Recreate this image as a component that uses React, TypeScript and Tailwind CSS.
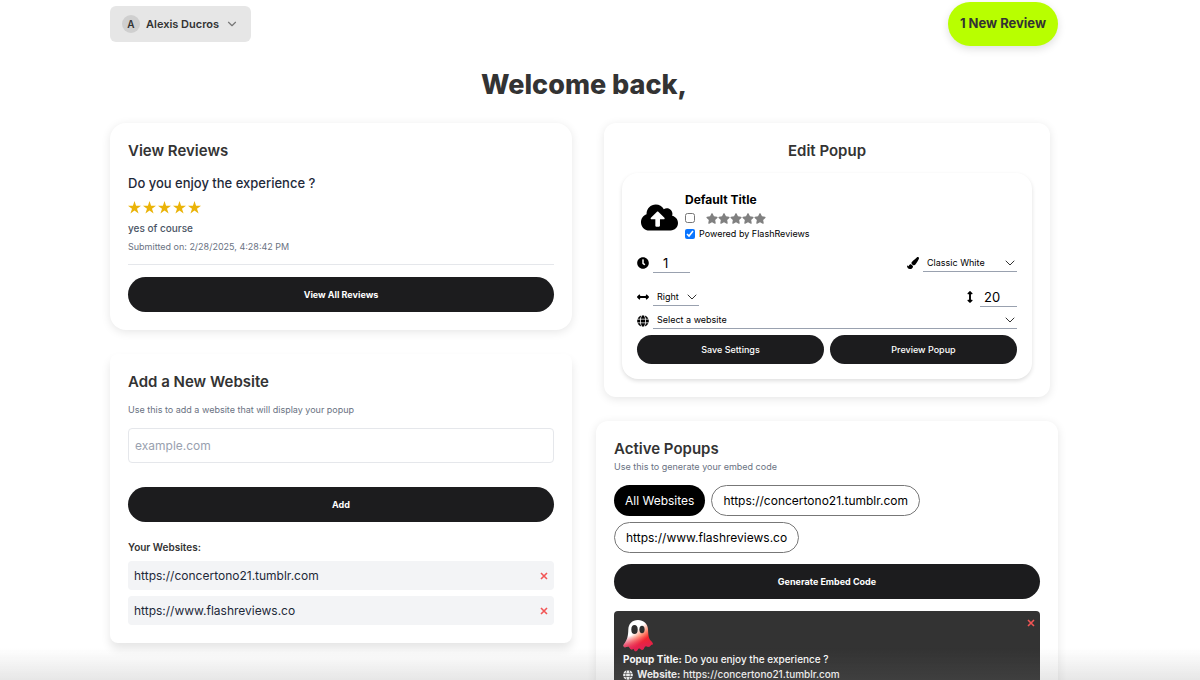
import { useState } from "react";
import type { ReactNode } from "react";
import { ChevronDown } from "lucide-react";
import {
  FaArrowsAltH,
  FaArrowsAltV,
  FaClock,
  FaCloudUploadAlt,
  FaGlobe,
  FaPaintBrush,
  FaStar,
} from "react-icons/fa";

const websites = ["https://concertono21.tumblr.com", "https://www.flashreviews.co"];

function SectionTitle({ children }: { children: ReactNode }) {
  return (
    <h2 className="text-[15px] leading-5 font-semibold text-[#333]">{children}</h2>
  );
}

function PrimaryButton({ children }: { children: ReactNode }) {
  return (
    <button
      type="button"
      className="block h-[35px] w-full rounded-full bg-[#1c1c1e] text-[9px] font-bold text-white"
    >
      {children}
    </button>
  );
}

function Cross() {
  return (
    <svg viewBox="0 0 8 8" className="size-2 text-[#f25555]" aria-hidden="true">
      <path d="M1 1l6 6M7 1L1 7" stroke="currentColor" strokeWidth="1.6" />
    </svg>
  );
}

function ReviewStars() {
  return (
    <div className="flex h-5 items-center gap-[2px]" aria-label="5 stars">
      {Array.from({ length: 5 }).map((_, index) => (
        <svg key={index} viewBox="0 0 24 24" className="size-[13px] fill-[#eab308]">
          <path d="M12 0l2.9 8.8H24l-7.4 5.4 2.9 9L12 17.7l-7.5 5.5 2.9-9L0 8.8h9.1z" />
        </svg>
      ))}
    </div>
  );
}

function Ghost() {
  return (
    <svg viewBox="0 0 30 33" className="h-[33px] w-[30px]" aria-hidden="true">
      <defs>
        <linearGradient id="ghost" x1="0.2" y1="0.2" x2="0.72" y2="0.85">
          <stop offset="0.3" stopColor="#fff" />
          <stop offset="0.55" stopColor="#ff9a80" />
          <stop offset="0.8" stopColor="#fa2626" />
          <stop offset="1" stopColor="#e8242f" />
        </linearGradient>
        <linearGradient id="ghost-hem" x1="0" y1="0" x2="0" y2="1">
          <stop offset="0.5" stopColor="#e0215a" stopOpacity="0" />
          <stop offset="0.9" stopColor="#e0215a" stopOpacity="0.85" />
        </linearGradient>
      </defs>
      {["url(#ghost)", "url(#ghost-hem)"].map((fill) => (
        <path
          key={fill}
          d="M15 1C9 1 5.500 5 5.300 10.500C5.200 16 4.500 21 .8 25.500C-.3 27.500 1.500 29 4 27.700C5.500 27 6.300 27.500 6.800 29C7.500 31 9.500 30.500 10.500 29.700C11.300 30.500 11.200 32.500 13 32.300C14.800 32 14.500 29.500 16 29.300C17.500 29.200 17.500 31 19.500 30.700C21.500 30.300 20.800 28 22.500 27.300C24 26.800 24.500 28.200 26.500 27.500C28 27 27 25.800 29.500 25.500C30.500 24.500 29 23 27.500 21.500C25.300 19 25.300 14.500 25 10C24.500 4.500 20.500 1 15 1Z"
          fill={fill}
        />
      ))}
      <ellipse cx="11.500" cy="10.500" rx="3.200" ry="4.500" fill="#2d2d2d" />
      <ellipse cx="19" cy="10.500" rx="2.600" ry="3.700" fill="#2d2d2d" />
    </svg>
  );
}

function ViewReviews() {
  return (
    <section className="rounded-2xl bg-white p-[18px] shadow-[0_2px_10px_rgba(0,0,0,0.1)]">
      <SectionTitle>View Reviews</SectionTitle>
      <div className="mt-3 border-b border-gray-200 pb-[9px]">
        <h3 className="text-[13px] leading-5 font-medium text-gray-800">
          Do you enjoy the experience ?
        </h3>
        <div className="mt-1">
          <ReviewStars />
        </div>
        <p className="mt-[3px] text-[10px] leading-4 font-medium text-gray-600">
          yes of course
        </p>
        <p className="mt-[3px] text-[9px] leading-4 text-gray-500">
          Submitted on: 2/28/2025, 4:28:42 PM
        </p>
      </div>
      <div className="mt-3">
        <PrimaryButton>View All Reviews</PrimaryButton>
      </div>
    </section>
  );
}

function AddWebsite() {
  return (
    <section className="rounded-lg bg-white p-[18px] shadow-[0_6px_10px_rgba(0,0,0,0.1)]">
      <SectionTitle>Add a New Website</SectionTitle>
      <label htmlFor="website" className="mt-[10px] block text-[9px] leading-4 text-gray-500">
        Use this to add a website that will display your popup
      </label>
      <input
        id="website"
        type="text"
        placeholder="example.com"
        className="mt-[10px] block h-[35px] w-full rounded border border-gray-200 px-[6px] text-xs placeholder:text-gray-400"
      />
      <div className="mt-6">
        <PrimaryButton>Add</PrimaryButton>
      </div>
      <h3 className="mt-[17px] text-[10px] leading-4 font-semibold text-[#333]">
        Your Websites:
      </h3>
      <ul className="mt-[6px] flex flex-col gap-[6px]">
        {websites.map((site) => (
          <li
            key={site}
            className="flex h-[29px] items-center justify-between rounded bg-gray-100 px-[6px] text-xs text-gray-800"
          >
            {site}
            <button type="button" aria-label={`Remove ${site}`}>
              <Cross />
            </button>
          </li>
        ))}
      </ul>
    </section>
  );
}

type PickerProps = {
  label: string;
  icon: ReactNode;
  options: string[];
  className: string;
};

function Picker({ label, icon, options, className }: PickerProps) {
  return (
    <label className={className}>
      {icon}
      <span className="relative flex flex-1 items-center border-b border-gray-400">
        <select
          aria-label={label}
          className="h-4 w-full appearance-none bg-transparent pr-5 pl-1 text-[9px] text-black"
        >
          {options.map((option) => (
            <option key={option}>{option}</option>
          ))}
        </select>
        <ChevronDown
          className="pointer-events-none absolute -right-[1px] size-4 text-[#333]"
          strokeWidth={1.5}
        />
      </span>
    </label>
  );
}

function EditPopup() {
  const [branded, setBranded] = useState(true);

  return (
    <section className="mx-2 rounded-xl bg-white p-[18px] shadow-[0_2px_10px_rgba(0,0,0,0.1)]">
      <div className="text-center">
        <SectionTitle>Edit Popup</SectionTitle>
      </div>
      <div className="mt-3 rounded-2xl bg-white px-[15px] pt-[19px] pb-[15px] shadow-[0_2px_4px_rgba(0,0,0,0.13)]">
        <div className="flex items-center gap-[7px] pl-1">
          <button type="button" aria-label="Upload logo">
            <FaCloudUploadAlt className="size-[37px]" />
          </button>
          <div>
            <h3 className="text-xs leading-4 font-bold text-black">Default Title</h3>
            <div className="mt-[2px] flex h-4 items-center">
              <input type="checkbox" aria-label="Show stars" className="size-[10px]" />
              <span className="ml-[11px] flex text-[#808080]">
                {Array.from({ length: 5 }).map((_, index) => (
                  <FaStar key={index} className="h-[11px] w-3" />
                ))}
              </span>
            </div>
            <label className="flex h-4 items-center gap-1 text-[9px] text-black">
              <input
                type="checkbox"
                checked={branded}
                onChange={() => setBranded(!branded)}
                className="size-[10px] accent-[#0a75ff]"
              />
              Powered by FlashReviews
            </label>
          </div>
        </div>

        <div className="mt-[11px] flex items-center justify-between">
          <label className="flex items-center gap-1">
            <FaClock className="size-3" />
            <input
              type="text"
              inputMode="numeric"
              aria-label="Delay"
              defaultValue="1"
              className="h-5 w-[37px] border-b border-gray-400 pl-[10px] text-[13px]"
            />
          </label>
          <Picker
            label="Theme"
            icon={<FaPaintBrush className="size-3" />}
            options={["Classic White", "Dark"]}
            className="flex w-[110px] items-center gap-1"
          />
        </div>
        <div className="mt-[14px] flex items-center justify-between">
          <Picker
            label="Side"
            icon={<FaArrowsAltH className="size-3" />}
            options={["Right", "Left"]}
            className="flex w-[62px] items-center gap-1"
          />
          <label className="flex items-center gap-1">
            <FaArrowsAltV className="size-3" />
            <input
              type="text"
              inputMode="numeric"
              aria-label="Offset"
              defaultValue="20"
              className="h-5 w-[37px] border-b border-gray-400 pl-1 text-[13px]"
            />
          </label>
        </div>
        <Picker
          label="Website"
          icon={<FaGlobe className="size-3" />}
          options={["Select a website", ...websites]}
          className="mt-[5px] flex items-center gap-1"
        />
        <div className="mt-[6px] grid grid-cols-2 gap-[6px]">
          <button
            type="button"
            className="h-[29px] rounded-full bg-[#1c1c1e] text-[9px] font-medium text-white"
          >
            Save Settings
          </button>
          <button
            type="button"
            className="h-[29px] rounded-full bg-[#1c1c1e] text-[9px] font-medium text-white"
          >
            Preview Popup
          </button>
        </div>
      </div>
    </section>
  );
}

function ActivePopups() {
  return (
    <section className="rounded-xl bg-white p-[18px] shadow-[0_2px_10px_rgba(0,0,0,0.1)]">
      <SectionTitle>Active Popups</SectionTitle>
      <p className="text-[9px] leading-4 text-gray-500">
        Use this to generate your embed code
      </p>
      <div className="mt-[10px] flex flex-wrap gap-[6px] text-xs text-black">
        <button type="button" className="h-[31px] rounded-full bg-black px-[11px] text-white">
          All Websites
        </button>
        {websites.map((site) => (
          <button
            key={site}
            type="button"
            className="h-[31px] rounded-full border border-[#777] px-[11px]"
          >
            {site}
          </button>
        ))}
      </div>
      <div className="mt-[11px]">
        <PrimaryButton>Generate Embed Code</PrimaryButton>
      </div>
      <article className="relative mt-3 rounded bg-[#333] px-[9px] py-2 text-[10px] leading-[15px] font-medium text-white">
        <button
          type="button"
          aria-label="Delete popup"
          className="absolute top-2 right-[5px]"
        >
          <Cross />
        </button>
        <Ghost />
        <p>
          <strong>Popup Title:</strong> Do you enjoy the experience ?
        </p>
        <p className="flex items-center gap-1">
          <FaGlobe className="size-[10px]" />
          <span>
            <strong>Website:</strong> {websites[0]}
          </span>
        </p>
      </article>
    </section>
  );
}

export default function App() {
  return (
    <div className="min-h-screen bg-white pr-[142px] pl-[110px] font-['Inter',sans-serif]">
      <header className="flex h-12 items-center justify-between">
        <button
          type="button"
          className="flex h-9 items-center gap-[6px] rounded-md bg-[#e6e6e6] px-3 text-[11px] font-semibold text-[#333]"
        >
          <span className="flex size-[18px] items-center justify-center rounded-full bg-[#cfcfcf] text-[10px]">
            A
          </span>
          Alexis Ducros
          <ChevronDown className="size-[14px] text-[#777]" strokeWidth={2} />
        </button>
        <button
          type="button"
          className="h-11 rounded-full bg-[#b8ff00] px-3 text-[13px] font-bold text-[#333] shadow-[0_3px_8px_rgba(0,0,0,0.13)]"
        >
          1 New Review
        </button>
      </header>

      <h1 className="mt-[21px] text-center text-[27px] leading-8 font-extrabold text-[#333]">
        Welcome back,
      </h1>

      <main className="mt-[22px] grid grid-cols-2 items-start gap-6">
        <div className="flex flex-col gap-6">
          <ViewReviews />
          <AddWebsite />
        </div>
        <div className="flex flex-col gap-6">
          <EditPopup />
          <ActivePopups />
        </div>
      </main>

      {/* Soft fade along the bottom of the window */}
      <div className="pointer-events-none fixed inset-x-0 bottom-0 h-8 bg-gradient-to-b from-transparent to-[#787878]/18" />
    </div>
  );
}
